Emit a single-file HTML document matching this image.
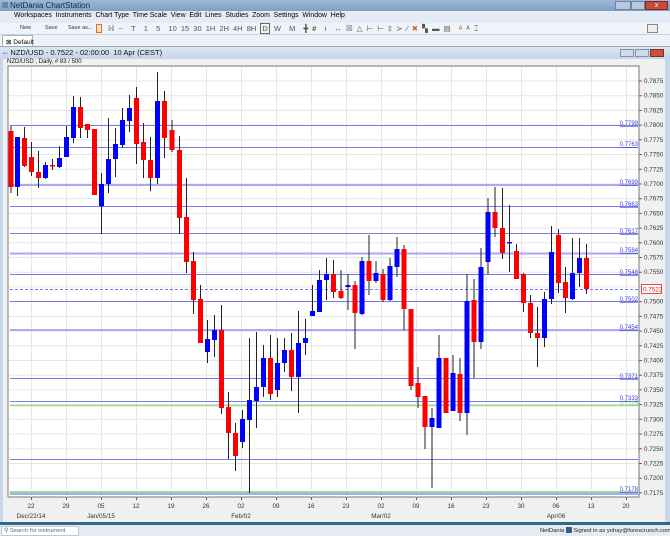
<!DOCTYPE html>
<html><head><meta charset="utf-8"><style>
*{margin:0;padding:0;box-sizing:border-box}
body{width:670px;height:536px;overflow:hidden;background:#dfe6ef;font-family:"Liberation Sans",sans-serif;position:relative}
.a{position:absolute;white-space:nowrap}
</style></head><body>
<div class="a" style="left:0;top:0;width:670px;height:11px;background:linear-gradient(#9db8d6,#7f9fc4)"></div>
<div class="a" style="left:10px;top:1px;font-size:8px;color:#1a2a3a">NetDania ChartStation</div>
<div class="a" style="left:2px;top:2px;width:6px;height:6px;background:#6a86a8"></div>
<div class="a" style="left:615px;top:1px;width:16px;height:9px;background:#b7c9dd;border:1px solid #6a84a4"></div>
<div class="a" style="left:631px;top:1px;width:14px;height:9px;background:#b7c9dd;border:1px solid #6a84a4"></div>
<div class="a" style="left:645px;top:1px;width:23px;height:9px;background:#c8483a;border:1px solid #7a2a20;color:#fff;font-size:7px;text-align:center;line-height:7px">x</div>
<div class="a" style="left:0;top:11px;width:670px;height:12px;background:#e4ebf4"></div>
<div class="a" style="left:14px;top:12px;font-size:6.9px;color:#000">Workspaces&nbsp; Instruments&nbsp; Chart Type&nbsp; Time Scale&nbsp; View&nbsp; Edit&nbsp; Lines&nbsp; Studies&nbsp; Zoom&nbsp; Settings&nbsp; Window&nbsp; Help</div>
<div class="a" style="left:0;top:23px;width:670px;height:12px;background:#f0f3f8;border-bottom:1px solid #c9d2de"></div>
<div class="a" style="left:20px;top:25px;font-size:5.5px;color:#333">New</div>
<div class="a" style="left:45px;top:25px;font-size:5.5px;color:#333">Save</div>
<div class="a" style="left:68px;top:25px;font-size:5.5px;color:#333">Save as...</div>
<div class="a" style="left:96px;top:24px;width:6px;height:9px;border:1px solid #e07020;background:#fbe3cc"></div>
<div class="a" style="left:108px;top:24px;font-size:7.5px;color:#555;word-spacing:2px">ℍ ~ &nbsp;T&nbsp; 1&nbsp; 5&nbsp; 10 15 30 1H 2H 4H 8H <span style="border:1px solid #666;padding:0 1px">D</span> W&nbsp; M&nbsp; <b>╋ #</b> &nbsp;i&nbsp; ↔ ☒ △ ⊢ ⊢ ‡ ≻ ⁄ <span style="color:#e06020">✖</span> ▚ ▬ ▤ &nbsp;<span style="color:#c55">ᴬ</span> ᴬ ⌶</div>
<div class="a" style="left:647px;top:24px;width:11px;height:9px;border:1px solid #888;background:#eee"></div>
<div class="a" style="left:0;top:35px;width:670px;height:12px;background:#eef1f5"></div>
<div class="a" style="left:2px;top:35px;width:31px;height:12px;background:#fff;border:1px solid #aab4c0;border-bottom:none;font-size:6.5px;padding:2px 0 0 3px">⊠ Default</div>
<div class="a" style="left:0;top:46px;width:670px;height:1px;background:#9aaabb"></div>
<div class="a" style="left:0;top:47px;width:670px;height:479px;background:#c7d6e8"></div>
<div class="a" style="left:0;top:47px;width:670px;height:12px;background:linear-gradient(#dbe6f2,#c5d5e8)"></div>
<div class="a" style="left:3px;top:48px;font-size:7.5px;color:#111"><span style="font-size:5px;color:#556">▪▫▫</span> NZD/USD - 0.7522 - 02:00:00&nbsp; 10 Apr (CEST)</div>
<div class="a" style="left:620px;top:49px;width:14px;height:8px;background:#cfdbe9;border:1px solid #7f94ad"></div>
<div class="a" style="left:635px;top:49px;width:14px;height:8px;background:#cfdbe9;border:1px solid #7f94ad"></div>
<div class="a" style="left:650px;top:49px;width:14px;height:8px;background:#cc5040;border:1px solid #7a3020"></div>
<div class="a" style="left:3px;top:59px;width:662px;height:464px;background:#f0f0f0"></div>
<div class="a" style="left:7px;top:59px;font-size:6px;color:#111">NZD/USD , Daily, # 83 / 500</div>
<div class="a" style="left:0;top:522px;width:670px;height:3px;background:#2e6a86"></div>
<div class="a" style="left:0;top:525px;width:670px;height:11px;background:#e6ebf2"></div>
<div class="a" style="left:1px;top:526px;width:78px;height:10px;background:#fff;border:1px solid #c0c8d2;font-size:5.8px;color:#666;padding:1px 0 0 2px">⚲ Search for instrument</div>
<div class="a" style="left:540px;top:527px;font-size:5.8px;color:#222">NetDania <span style="display:inline-block;width:6px;height:6px;background:#3a5a8a;vertical-align:-1px"></span> Signed in as yohay@forexcrunch.com</div>

<svg class="a" style="left:0;top:0" width="670" height="536" font-family="Liberation Sans, sans-serif">
<rect x="8" y="66" width="631" height="431" fill="#fff" stroke="#777" stroke-width="1"/>
<g stroke="#e6e6e6" stroke-width="1">
<path d="M31.5 67V497M66.5 67V497M101.5 67V497M136.5 67V497M171.5 67V497M206.5 67V497M241.5 67V497M276.5 67V497M311.5 67V497M346.5 67V497M381.5 67V497M416.5 67V497M451.5 67V497M486.5 67V497M521.5 67V497M556.5 67V497M591.5 67V497M626.5 67V497"/>
<path d="M9 81H638M9 95.7H638M9 110.4H638M9 125.1H638M9 139.8H638M9 154.5H638M9 169.3H638M9 184H638M9 198.7H638M9 213.4H638M9 228.1H638M9 242.8H638M9 257.5H638M9 272.2H638M9 286.9H638M9 301.6H638M9 316.4H638M9 331.1H638M9 345.8H638M9 360.5H638M9 375.2H638M9 389.9H638M9 404.6H638M9 419.3H638M9 434H638M9 448.8H638M9 463.5H638M9 478.2H638M9 492.9H638"/>
</g>
<g stroke="#7878f0" stroke-width="1">
<path d="M10 125.5H638M10 147.5H638M10 206.5H638M10 233.5H638M10 274.5H638M10 301.5H638M10 378.5H638M10 401.5H638M10 459.5H638"/>
</g>
<g stroke="#a8a8f4" stroke-width="2"><path d="M10 185H638M10 253.5H638M10 330H638M10 494H638"/></g>
<path d="M10 289.5H638" stroke="#7878f0" stroke-dasharray="3,2"/>
<path d="M10 405.5H638" stroke="#90e090" stroke-width="1.5"/>
<path d="M10 492H638" stroke="#70d870" stroke-width="1.5"/>
<g font-size="6" fill="#4040e0" text-anchor="end" text-decoration="underline">
<text x="638" y="125">0.7799</text><text x="638" y="146">0.7763</text><text x="638" y="184">0.7699</text><text x="638" y="206">0.7663</text><text x="638" y="233">0.7617</text><text x="638" y="252">0.7584</text><text x="638" y="274">0.7548</text><text x="638" y="301">0.7502</text><text x="638" y="329">0.7454</text><text x="638" y="378">0.7371</text><text x="638" y="400">0.7333</text><text x="638" y="491">0.7178</text>
</g>
<text x="638" y="405" font-size="6" fill="#80d080" text-anchor="end">0.7325</text>
<path stroke="#222" stroke-width="1" fill="none" d="M11 126V193M17.5 137V196M24.5 127V167M31.5 142V176M38.5 151V188M45.5 162V179M52.5 159V170M59.5 146V168M66.5 126V157M73.5 96V143M80.5 97V138M87.5 124V138M94.5 129V195M101.5 173V234M108.5 118V193M115.5 128V177M122.5 108V148M129.5 95V132M136.5 87V164M143.5 123V178M150.5 137V191M157.5 72V184M164.5 91V158M172 120V152M179.5 136V234M186.5 178V273M193.5 252V314M200.5 285V343M207.5 320V363M214.5 315V357M221.5 305V414M228.5 392V459M235.5 423V471M242.5 410V448M249.5 338V493M256.5 332V428M263.5 345V397M270.5 335V400M277.5 338V397M284.5 338V372M291.5 333V391M298.5 311V413M305.5 319V355M312.5 285V316M319.5 270V312M326.5 258V300M333.5 260V298M341 270V299M348 274V310M355 281V349M362 257V315M369 235V295M376 261V283M383 269V302M390 258V301M397 237V277M404 245V330M411 309V390M418 367V408M425 396V449M432 408V488M439 335V428M446 358V413M453 355V411M460 358V421M467 274V435M474 279V378M481 248V349M488 198V274M495 187V237M502.5 188V259M509.5 205V272M516.5 244V279M523.5 273V312M530.5 295V338M537.5 307V367M544.5 292V347M551.5 226V304M558.5 229V293M565.5 267V313M572.5 238V300M579.5 238V287M586.5 244V294"/>
<g fill="#f00">
<rect x="8.5" y="131" width="5" height="56"/><rect x="22" y="138" width="5" height="28"/><rect x="29" y="157" width="5" height="15"/><rect x="36" y="172" width="5" height="6"/><rect x="50" y="165" width="5" height="1.5"/><rect x="78" y="107" width="5" height="21"/><rect x="85" y="124" width="5" height="6"/><rect x="92" y="129" width="5" height="66"/><rect x="134" y="98" width="5" height="46"/><rect x="141" y="142" width="5" height="18"/><rect x="148" y="160" width="5" height="18"/><rect x="162" y="101" width="5" height="37"/><rect x="169.5" y="130" width="5" height="20"/><rect x="177" y="150" width="5" height="68"/><rect x="184" y="217" width="5" height="45"/><rect x="191" y="261" width="5" height="39"/><rect x="198" y="299" width="5" height="44"/><rect x="219" y="330" width="5" height="78"/><rect x="226" y="407" width="5" height="26"/><rect x="233" y="433" width="5" height="23"/><rect x="268" y="358" width="5" height="36"/><rect x="289" y="350" width="5" height="27"/><rect x="331" y="274" width="5" height="18"/><rect x="338.5" y="291" width="5" height="7"/><rect x="352.5" y="285" width="5" height="28"/><rect x="366.5" y="261" width="5" height="20"/><rect x="380.5" y="274" width="5" height="26"/><rect x="401.5" y="249" width="5" height="60"/><rect x="408.5" y="309" width="5" height="77"/><rect x="415.5" y="383" width="5" height="14"/><rect x="422.5" y="396" width="5" height="31"/><rect x="443.5" y="358" width="5" height="55"/><rect x="457.5" y="374" width="5" height="39"/><rect x="471.5" y="300" width="5" height="42"/><rect x="492.5" y="212" width="5" height="16"/><rect x="500" y="228" width="5" height="25"/><rect x="514" y="251" width="5" height="28"/><rect x="521" y="274" width="5" height="29"/><rect x="528" y="303" width="5" height="30"/><rect x="535" y="333" width="5" height="5"/><rect x="556" y="235" width="5" height="48"/><rect x="563" y="282" width="5" height="16"/><rect x="584" y="258" width="5" height="31"/>
</g>
<g fill="#00f">
<rect x="15" y="137" width="5" height="50"/><rect x="43" y="165" width="5" height="13"/><rect x="57" y="158" width="5" height="9"/><rect x="64" y="137" width="5" height="20"/><rect x="71" y="107" width="5" height="31"/><rect x="99" y="184" width="5" height="22"/><rect x="106" y="159" width="5" height="25"/><rect x="113" y="144" width="5" height="15"/><rect x="120" y="120" width="5" height="25"/><rect x="127" y="108" width="5" height="13"/><rect x="155" y="101" width="5" height="77"/><rect x="205" y="339" width="5" height="13"/><rect x="212" y="330" width="5" height="10"/><rect x="240" y="419" width="5" height="23"/><rect x="247" y="400" width="5" height="20"/><rect x="254" y="387" width="5" height="14"/><rect x="261" y="358" width="5" height="29"/><rect x="275" y="363" width="5" height="27"/><rect x="282" y="350" width="5" height="13"/><rect x="296" y="343" width="5" height="34"/><rect x="303" y="338" width="5" height="5"/><rect x="310" y="311" width="5" height="5"/><rect x="317" y="280" width="5" height="32"/><rect x="324" y="274" width="5" height="6"/><rect x="345.5" y="285" width="5" height="2"/><rect x="359.5" y="261" width="5" height="53"/><rect x="373.5" y="273" width="5" height="8"/><rect x="387.5" y="266" width="5" height="34"/><rect x="394.5" y="249" width="5" height="18"/><rect x="429.5" y="418" width="5" height="9"/><rect x="436.5" y="358" width="5" height="70"/><rect x="450.5" y="373" width="5" height="38"/><rect x="464.5" y="301" width="5" height="112"/><rect x="478.5" y="267" width="5" height="75"/><rect x="485.5" y="212" width="5" height="50"/><rect x="507" y="242" width="5" height="1.5"/><rect x="542" y="299" width="5" height="39"/><rect x="549" y="252" width="5" height="47"/><rect x="570" y="273" width="5" height="26"/><rect x="577" y="258" width="5" height="15"/>
</g>
<g font-size="6.3" fill="#333">
<text x="644" y="83">0.7875</text><text x="644" y="97.7">0.7850</text><text x="644" y="112.4">0.7825</text><text x="644" y="127.1">0.7800</text><text x="644" y="141.8">0.7775</text><text x="644" y="156.5">0.7750</text><text x="644" y="171.3">0.7725</text><text x="644" y="186">0.7700</text><text x="644" y="200.7">0.7675</text><text x="644" y="215.4">0.7650</text><text x="644" y="230.1">0.7625</text><text x="644" y="244.8">0.7600</text><text x="644" y="259.5">0.7575</text><text x="644" y="274.2">0.7550</text><text x="644" y="303.6">0.7500</text><text x="644" y="318.4">0.7475</text><text x="644" y="333.1">0.7450</text><text x="644" y="347.8">0.7425</text><text x="644" y="362.5">0.7400</text><text x="644" y="377.2">0.7375</text><text x="644" y="391.9">0.7350</text><text x="644" y="406.6">0.7325</text><text x="644" y="421.3">0.7300</text><text x="644" y="436">0.7275</text><text x="644" y="450.8">0.7250</text><text x="644" y="465.5">0.7225</text><text x="644" y="480.2">0.7200</text><text x="644" y="494.9">0.7175</text>
</g>
<path stroke="#c33" d="M639 81H642M639 95.7H642M639 110.4H642M639 125.1H642M639 139.8H642M639 154.5H642M639 169.3H642M639 184H642M639 198.7H642M639 213.4H642M639 228.1H642M639 242.8H642M639 257.5H642M639 272.2H642M639 301.6H642M639 316.4H642M639 331.1H642M639 345.8H642M639 360.5H642M639 375.2H642M639 389.9H642M639 404.6H642M639 419.3H642M639 434H642M639 448.8H642M639 463.5H642M639 478.2H642M639 492.9H642"/>
<rect x="641.5" y="284.5" width="20" height="9" fill="#fff" stroke="#e05050"/>
<text x="643" y="291.5" font-size="6.3" fill="#e02020">0.7522</text>
<path stroke="#c33" d="M31.5 497V500M66.5 497V500M101.5 497V500M136.5 497V500M171.5 497V500M206.5 497V500M241.5 497V500M276.5 497V500M311.5 497V500M346.5 497V500M381.5 497V500M416.5 497V500M451.5 497V500M486.5 497V500M521.5 497V500M556.5 497V500M591.5 497V500M626.5 497V500"/>
<g font-size="6.3" fill="#333" text-anchor="middle">
<text x="31" y="508">22</text><text x="66" y="508">29</text><text x="101" y="508">05</text><text x="136" y="508">12</text><text x="171" y="508">19</text><text x="206" y="508">26</text><text x="241" y="508">02</text><text x="276" y="508">09</text><text x="311" y="508">16</text><text x="346" y="508">23</text><text x="381" y="508">02</text><text x="416" y="508">09</text><text x="451" y="508">16</text><text x="486" y="508">23</text><text x="521" y="508">30</text><text x="556" y="508">06</text><text x="591" y="508">13</text><text x="626" y="508">20</text>
<text x="31" y="518">Dec/22/14</text><text x="101" y="518">Jan/05/15</text><text x="241" y="518">Feb/02</text><text x="381" y="518">Mar/02</text><text x="556" y="518">Apr/06</text>
</g>
</svg>
</body></html>
